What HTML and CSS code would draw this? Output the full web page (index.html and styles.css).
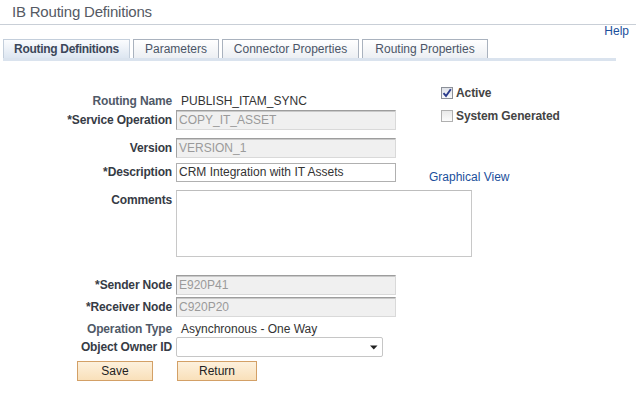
FILE: index.html
```html
<!DOCTYPE html>
<html lang="en">
<head>
<meta charset="utf-8">
<title>IB Routing Definitions</title>
<link rel="stylesheet" href="styles.css">
</head>
<body>
<header class="title">IB Routing Definitions</header>
<div class="helpbar"><a class="link" href="#">Help</a></div>
<nav class="tabs">
  <span class="tab active t1">Routing Definitions</span>
  <span class="tab t2">Parameters</span>
  <span class="tab t3">Connector Properties</span>
  <span class="tab t4">Routing Properties</span>
</nav>
<main class="form">
  <section class="top">
    <div class="col-left">
      <div class="row r-name"><span class="lbl ro">Routing Name</span><span class="val">PUBLISH_ITAM_SYNC</span></div>
      <div class="row r-field"><span class="lbl">*Service Operation</span><span class="input disabled">COPY_IT_ASSET</span></div>
      <div class="row r-field r-ver"><span class="lbl">Version</span><span class="input disabled">VERSION_1</span></div>
      <div class="row r-field r-desc"><span class="lbl">*Description</span><span class="input edit">CRM Integration with IT Assets</span></div>
    </div>
    <div class="col-right">
      <div class="cb-row"><span class="cb checked"><svg width="10" height="10" viewBox="0 0 10 10"><path d="M1.5 5.2 L4 8 L8.8 1.2" fill="none" stroke="#2b3b8c" stroke-width="1.9"/></svg></span><span class="cb-lbl">Active</span></div>
      <div class="cb-row cb-second"><span class="cb"></span><span class="cb-lbl">System Generated</span></div>
      <a class="link gview" href="#">Graphical View</a>
    </div>
  </section>
  <div class="row r-comments"><span class="lbl">Comments</span><span class="textarea"></span></div>
  <div class="row r-field r-sender"><span class="lbl">*Sender Node</span><span class="input disabled">E920P41</span></div>
  <div class="row r-field r-recv"><span class="lbl">*Receiver Node</span><span class="input disabled">C920P20</span></div>
  <div class="row r-optype"><span class="lbl ro">Operation Type</span><span class="val">Asynchronous - One Way</span></div>
  <div class="row r-field"><span class="lbl">Object Owner ID</span><span class="select"><svg width="8" height="5" viewBox="0 0 8 5"><path d="M0 0.5 H7.5 L3.75 4.5 Z" fill="#222"/></svg></span></div>
  <div class="buttons">
    <span class="btn save">Save</span>
    <span class="btn ret">Return</span>
  </div>
</main>
</body>
</html>
```

FILE: styles.css
```css
* { box-sizing: border-box; }

body {
  margin: 0;
  font-family: "Liberation Sans", Arial, sans-serif;
  font-size: 12px;
  color: #333;
  background: #fff;
}

.title {
  height: 25px;
  border-bottom: 1px solid #c9cfd7;
  padding-left: 12px;
  font-size: 15px;
  letter-spacing: -0.2px;
  line-height: 24px;
  color: #555a64;
}

.helpbar {
  height: 14px;
  display: flex;
  justify-content: flex-end;
  padding-right: 7px;
  line-height: 12px;
}

.link {
  color: #1b4f9c;
  text-decoration: none;
}

.tabs {
  display: flex;
  gap: 3px;
  margin-left: 3px;
  width: 613px;
  height: 22px;
  border-bottom: 3px solid #dae3ee;
}

.tab {
  height: 19px;
  border: 1px solid #a9b2be;
  border-bottom: none;
  line-height: 18px;
  text-align: center;
  color: #4b5567;
  background: linear-gradient(#ffffff, #eceff3);
  white-space: nowrap;
}

.tab.active {
  border-color: #c3cedb;
  background: linear-gradient(#fbfcfe, #dde6f1);
  font-weight: bold;
  letter-spacing: -0.3px;
  color: #3c475a;
}

.t1 { width: 127px; }
.t2 { width: 86px; }
.t3 { width: 137px; }
.t4 { width: 126px; }

.form {
  padding-top: 24px;
}

.top {
  display: flex;
  align-items: flex-start;
}

.col-left {
  width: 396px;
  padding-top: 7px;
  padding-bottom: 8px;
}

.col-right {
  margin-left: 33px;
  display: flex;
  flex-direction: column;
  align-items: flex-start;
}

.row {
  display: flex;
  align-items: center;
}

.lbl {
  width: 172px;
  flex: none;
  text-align: right;
  font-weight: bold;
  letter-spacing: -0.15px;
  color: #363b45;
  white-space: nowrap;
  line-height: 20px;
}

.lbl.ro {
  color: #505967;
}

.val {
  margin-left: 9px;
  color: #333;
  white-space: nowrap;
}

.r-name { height: 18px; }
.r-field { height: 20px; }
.r-ver { margin-top: 8px; }
.r-desc { margin-top: 4px; }

.input {
  margin-left: 4px;
  width: 220px;
  height: 20px;
  padding: 0 2px;
  line-height: 18px;
  white-space: nowrap;
}

.input.disabled {
  background: #f0f0f0;
  color: #9a9a9a;
  border: 1px solid;
  border-color: #9d9d9d #d9d9d9 #d9d9d9 #a3a3a3;
  box-shadow: inset 0 1px 0 #c9c9c9;
}

.input.edit {
  height: 19px;
  line-height: 17px;
  background: #fff;
  color: #333;
  border: 1px solid #b0b0b0;
}

.r-comments {
  align-items: flex-start;
}

.textarea {
  margin-left: 4px;
  width: 296px;
  height: 67px;
  border: 1px solid #c8c8c8;
  border-top-color: #bdbdbd;
  background: #fff;
}

.r-sender { margin-top: 18px; }
.r-recv { margin-top: 2px; }

.r-optype {
  margin-top: 4px;
  height: 16px;
}

.r-optype .lbl,
.r-optype .val {
  line-height: 16px;
}

.select {
  margin-left: 4px;
  width: 207px;
  height: 20px;
  border: 1px solid #c6c6c6;
  border-radius: 2px;
  background: #fff;
  display: flex;
  align-items: center;
  justify-content: flex-end;
  padding-right: 4px;
}

.buttons {
  display: flex;
  gap: 24px;
  margin-left: 77px;
  margin-top: 4px;
}

.btn {
  height: 20px;
  border: 1px solid #d3a066;
  background: linear-gradient(#fdf1dd, #f9e0ba);
  text-align: center;
  line-height: 18px;
  color: #222;
}

.save { width: 76px; }
.ret { width: 80px; }

.cb-row {
  height: 16px;
  display: flex;
  align-items: center;
  gap: 3px;
  padding-left: 12px;
  line-height: 16px;
}

.cb-second {
  margin-top: 7px;
}

.cb {
  width: 12px;
  height: 12px;
  border: 1px solid #b0b0b0;
  background: linear-gradient(#e9e9e9, #fcfcfc);
  display: flex;
  align-items: center;
  justify-content: center;
}

.cb.checked {
  border-color: #8c9098;
  background: linear-gradient(#dfe2e8, #f8f9fb);
}

.cb-lbl {
  font-weight: bold;
  letter-spacing: -0.1px;
  color: #444;
  white-space: nowrap;
}

.gview {
  margin-top: 45px;
  line-height: 16px;
}
```
